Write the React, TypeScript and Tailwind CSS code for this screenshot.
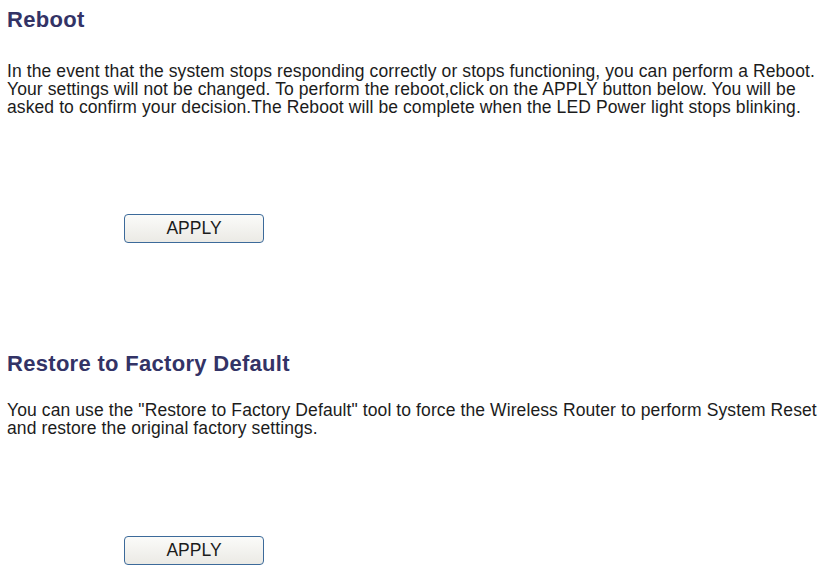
export default function App() {
  return (
    <div className="min-h-screen bg-white pl-[7px] pt-[8px] font-['Liberation_Sans',Arial,sans-serif] text-[#1c1c1c]">
      {/* Reboot */}
      <h1 className="text-[22px] font-bold leading-[24px] tracking-[0.3px] text-[#333366]">Reboot</h1>
      <p className="mt-[30px] whitespace-nowrap text-[17.5px] leading-[18px] tracking-[0.1px]">
        In the event that the system stops responding correctly or stops functioning, you can perform a Reboot.
        <br />
        Your settings will not be changed. To perform the reboot,click on the APPLY button below. You will be
        <br />
        asked to confirm your decision.The Reboot will be complete when the LED Power light stops blinking.
      </p>
      <div className="mt-[98px] pl-[117px]">
        <button className="h-[29px] w-[140px] rounded-[4px] border border-[#3c6a9a] bg-gradient-to-b from-[#fbfbf9] to-[#ebeae5] text-[17.5px] leading-none text-[#1c1c1c]">
          APPLY
        </button>
      </div>

      {/* Restore to Factory Default */}
      <h1 className="mt-[109px] text-[22px] font-bold leading-[24px] tracking-[0.3px] text-[#333366]">
        Restore to Factory Default
      </h1>
      <p className="mt-[25px] whitespace-nowrap text-[17.5px] leading-[18px] tracking-[0.1px]">
        You can use the "Restore to Factory Default" tool to force the Wireless Router to perform System Reset
        <br />
        and restore the original factory settings.
      </p>
      <div className="mt-[99px] pl-[117px]">
        <button className="h-[29px] w-[140px] rounded-[4px] border border-[#3c6a9a] bg-gradient-to-b from-[#fbfbf9] to-[#ebeae5] text-[17.5px] leading-none text-[#1c1c1c]">
          APPLY
        </button>
      </div>
    </div>
  );
}
